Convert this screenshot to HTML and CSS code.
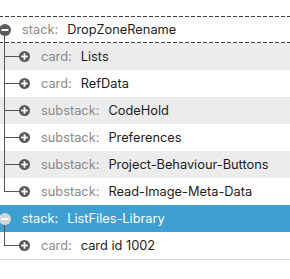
FILE: index.html
```html
<!DOCTYPE html>
<html>
<head>
<meta charset="utf-8">
<link rel="stylesheet" href="styles.css">
</head>
<body>
<div class="tree">
  <div class="group">
    <div class="row top open focus">
      <svg class="tog" viewBox="0 0 12 12"><circle cx="6" cy="6" r="6" fill="#5a5a5a"/><rect x="2.5" y="5" width="7" height="2" fill="#fff"/></svg>
      <span class="key">stack:</span><span class="val">DropZoneRename</span>
    </div>
    <div class="row child alt"><svg class="tog" viewBox="0 0 12 12"><circle cx="6" cy="6" r="6" fill="#5a5a5a"/><rect x="2.5" y="5" width="7" height="2" fill="#fff"/><rect x="5" y="2.5" width="2" height="7" fill="#fff"/></svg><span class="key">card:</span><span class="val">Lists</span></div>
    <div class="row child"><svg class="tog" viewBox="0 0 12 12"><circle cx="6" cy="6" r="6" fill="#5a5a5a"/><rect x="2.5" y="5" width="7" height="2" fill="#fff"/><rect x="5" y="2.5" width="2" height="7" fill="#fff"/></svg><span class="key">card:</span><span class="val">RefData</span></div>
    <div class="row child alt"><svg class="tog" viewBox="0 0 12 12"><circle cx="6" cy="6" r="6" fill="#5a5a5a"/><rect x="2.5" y="5" width="7" height="2" fill="#fff"/><rect x="5" y="2.5" width="2" height="7" fill="#fff"/></svg><span class="key">substack:</span><span class="val">CodeHold</span></div>
    <div class="row child"><svg class="tog" viewBox="0 0 12 12"><circle cx="6" cy="6" r="6" fill="#5a5a5a"/><rect x="2.5" y="5" width="7" height="2" fill="#fff"/><rect x="5" y="2.5" width="2" height="7" fill="#fff"/></svg><span class="key">substack:</span><span class="val">Preferences</span></div>
    <div class="row child alt"><svg class="tog" viewBox="0 0 12 12"><circle cx="6" cy="6" r="6" fill="#5a5a5a"/><rect x="2.5" y="5" width="7" height="2" fill="#fff"/><rect x="5" y="2.5" width="2" height="7" fill="#fff"/></svg><span class="key">substack:</span><span class="val">Project-Behaviour-Buttons</span></div>
    <div class="row child last"><svg class="tog" viewBox="0 0 12 12"><circle cx="6" cy="6" r="6" fill="#5a5a5a"/><rect x="2.5" y="5" width="7" height="2" fill="#fff"/><rect x="5" y="2.5" width="2" height="7" fill="#fff"/></svg><span class="key">substack:</span><span class="val">Read-Image-Meta-Data</span></div>
  </div>
  <div class="group">
    <div class="row top open selected">
      <svg class="tog" viewBox="0 0 12 12"><circle cx="6" cy="6" r="6" fill="#d3d7da"/><rect x="2.5" y="5" width="7" height="2" fill="#fff"/></svg>
      <span class="key">stack:</span><span class="val">ListFiles-Library</span>
    </div>
    <div class="row child last end"><svg class="tog" viewBox="0 0 12 12"><circle cx="6" cy="6" r="6" fill="#5a5a5a"/><rect x="2.5" y="5" width="7" height="2" fill="#fff"/><rect x="5" y="2.5" width="2" height="7" fill="#fff"/></svg><span class="key">card:</span><span class="val">card id 1002</span></div>
  </div>
</div>
</body>
</html>
```
FILE: styles.css
```css
html, body {
  margin: 0;
  padding: 0;
  background: #ffffff;
}
body {
  font-family: Inter, "Liberation Sans", Arial, sans-serif;
  font-size: 12.8px;
  color: #1c1c1c;
  width: 290px;
  height: 279px;
  overflow: hidden;
}
.tree {
  padding-top: 16px;
}
.row {
  position: relative;
  height: 27px;
  display: flex;
  align-items: center;
  box-sizing: border-box;
  white-space: nowrap;
}
.row.top {
  padding-left: 0;
  margin-left: -1px;
}
.row.top .tog {
  width: 12px;
  height: 12px;
  margin-right: 11px;
}
.row.child {
  padding-left: 19px;
}
.row.child .tog {
  width: 11px;
  height: 11px;
  margin-right: 11px;
}
.tog {
  flex: none;
  position: relative;
  z-index: 1;
}
.key {
  color: #8a8a8a;
  margin-right: 9px;
}
.val {
  color: #1c1c1c;
}
.alt {
  background: #ececec;
}
.focus {
  background-image:
    repeating-linear-gradient(90deg, #3a3a3a 0 4px, transparent 4px 6px),
    repeating-linear-gradient(90deg, #3a3a3a 0 4px, transparent 4px 6px);
  background-size: 100% 1px, 100% 1px;
  background-position: 0 0, 0 100%;
  background-repeat: no-repeat;
}
.selected {
  background: #3d9fd2;
}
.selected .key,
.selected .val {
  color: #ffffff;
}
/* tree lines */
.row.open::after {
  content: "";
  position: absolute;
  left: 5px;
  top: 19px;
  bottom: 0;
  width: 1px;
  background: #555;
}
.row.child::before {
  content: "";
  position: absolute;
  left: 4px;
  top: 0;
  bottom: 0;
  width: 1px;
  background: #555;
}
.row.child.last::before {
  bottom: 13px;
}
.row.child::after {
  content: "";
  position: absolute;
  left: 4px;
  top: 13px;
  width: 16px;
  height: 1px;
  background: #555;
}
.row.end {
  border-bottom: 1px solid #dcdcdc;
  height: 28px;
}
```
